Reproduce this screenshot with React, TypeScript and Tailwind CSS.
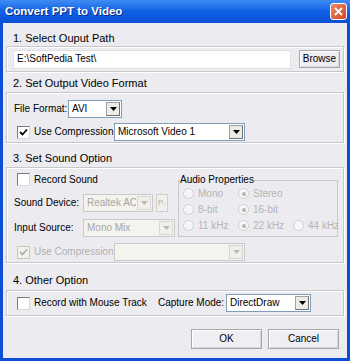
import React from "react";

const font = { fontFamily: '"Liberation Sans", Arial, sans-serif' };

function Select({ value, width, disabled }: { value: string; width: string; disabled?: boolean }) {
  return (
    <div
      className={`flex h-[18px] shrink-0 items-center border ${
        disabled ? "border-[#c9c9cc] bg-[#f4f3ee] text-[#a5a5a5]" : "border-[#7f9db9] bg-white text-black"
      } ${width}`}
    >
      <span className="flex-1 overflow-hidden pl-[3px] text-[10px] leading-none">{value}</span>
      <div
        className={`m-[1px] flex h-[14px] w-[14px] shrink-0 items-center justify-center border ${
          disabled ? "border-[#d8d7d3] bg-[#f0efea]" : "border-[#a0a0a0] border-r-[#707070] border-b-[#707070] bg-[#ecebe6]"
        }`}
      >
        <svg width="7" height="4" viewBox="0 0 7 4">
          <path d="M0 0h7L3.5 4z" fill={disabled ? "#b9b9b9" : "#000"} />
        </svg>
      </div>
    </div>
  );
}

function Check({ checked, disabled }: { checked?: boolean; disabled?: boolean }) {
  return (
    <div
      className={`flex h-[13px] w-[13px] shrink-0 items-center justify-center border ${
        disabled ? "border-[#c9c7ba] bg-[#f2f1ec]" : "border-[#7a7a7a] border-r-[#d8d8d8] border-b-[#d8d8d8] bg-white"
      }`}
    >
      {checked && (
        <svg width="9" height="9" viewBox="0 0 9 9">
          <path d="M1 4l2.5 2.5L8 1.5" stroke={disabled ? "#b0b0b0" : "#000"} strokeWidth="1.8" fill="none" />
        </svg>
      )}
    </div>
  );
}

function Radio({ label, checked, w }: { label: string; checked?: boolean; w: string }) {
  return (
    <div className={`flex shrink-0 items-center gap-[4px] ${w}`}>
      <div className="flex h-[11px] w-[11px] shrink-0 items-center justify-center rounded-full border border-[#cfcfcf] bg-[#f6f6f6]">
        {checked && <div className="h-[4px] w-[4px] rounded-full bg-[#b4b4b4]" />}
      </div>
      <span className="text-[10px] leading-none text-[#b5b5b5]">{label}</span>
    </div>
  );
}

function Group({ className, children }: { className?: string; children: React.ReactNode }) {
  return (
    <div className={`shrink-0 border border-[#c8c7cc] shadow-[inset_1px_1px_0_#fff,1px_1px_0_#fff] ${className ?? ""}`}>
      {children}
    </div>
  );
}

function Label({ children, className }: { children: React.ReactNode; className: string }) {
  return <div className={`h-[14px] shrink-0 px-[7px] text-[11px] leading-[14px] ${className}`}>{children}</div>;
}

function Button({ children, className }: { children: React.ReactNode; className?: string }) {
  return (
    <div
      className={`flex shrink-0 items-center justify-center border border-[#a8a8a8] bg-[#efeef2] text-[10px] text-black shadow-[inset_1px_1px_0_#fff,inset_-1px_-1px_0_#d6d5da] ${className ?? ""}`}
    >
      {children}
    </div>
  );
}

export default function App() {
  return (
    <div className="flex h-[361px] w-[350px] flex-col overflow-hidden whitespace-nowrap bg-[#0a4fd6]" style={font}>
      {/* title bar */}
      <div className="flex h-[23px] shrink-0 items-center justify-between bg-gradient-to-b from-[#3f8cf3] via-[#0f5fe6] to-[#0a50d4] pl-[5px] pr-[3px]">
        <span className="text-[11.5px] font-bold text-white [text-shadow:1px_1px_0_#0a2a80]">Convert PPT to Video</span>
        <div className="flex h-[17px] w-[17px] items-center justify-center rounded-[3px] border border-white bg-gradient-to-br from-[#e98a6a] to-[#d2431c]">
          <svg width="9" height="9" viewBox="0 0 9 9">
            <path d="M1 1l7 7M8 1l-7 7" stroke="#fff" strokeWidth="1.8" />
          </svg>
        </div>
      </div>

      {/* body */}
      <div className="mx-[3px] mb-[3px] flex flex-1 flex-col bg-[#ecebef] px-[3px] pt-[8px] text-[10px] leading-[12px] text-black">
        <Label className="mb-[1px]">1. Select Ouput Path</Label>
        <Group className="flex h-[26px] items-center gap-[8px] px-[6px]">
          <div className="flex h-[19px] w-[278px] shrink-0 items-center border border-[#e0e0e0] bg-white pl-[3px] text-[10px]">
            E:\SoftPedia Test\
          </div>
          <Button className="h-[18px] w-[41px] border-[#555] shadow-[inset_1px_1px_0_#fff,inset_-1px_-1px_0_#999]">Browse</Button>
        </Group>

        <Label className="mb-[2px] mt-[4px]">2. Set Output Video Format</Label>
        <Group className="flex h-[51px] flex-col gap-[5px] px-[7px] pt-[7px]">
          <div className="flex items-center">
            <span className="w-[54px] shrink-0">File Format:</span>
            <Select value="AVI" width="w-[54px]" />
          </div>
          <div className="flex items-center pl-[3px]">
            <Check checked />
            <span className="ml-[4px] w-[80px] shrink-0">Use Compression</span>
            <Select value="Microsoft Video 1" width="w-[131px]" />
          </div>
        </Group>

        <Label className="mb-[2px] mt-[8px]">3. Set Sound Option</Label>
        <Group className="flex h-[96px] flex-col px-[7px] pt-[5px]">
          <div className="flex">
            <div className="flex w-[164px] shrink-0 flex-col">
              <div className="flex items-center pl-[3px]">
                <Check />
                <span className="ml-[4px]">Record Sound</span>
              </div>
              <div className="mt-[8px] flex items-center">
                <span className="w-[69px] shrink-0">Sound Device:</span>
                <Select value="Realtek AC97" width="w-[70px]" disabled />
                <div className="ml-[3px] flex h-[18px] w-[12px] shrink-0 items-center overflow-hidden border border-[#d0cfd3] bg-[#f0efea] pl-[1px] text-[8px] text-[#b0b0b0]">P..</div>
              </div>
              <div className="mt-[7px] flex items-center">
                <span className="w-[69px] shrink-0">Input Source:</span>
                <Select value="Mono Mix" width="w-[92px]" disabled />
              </div>
            </div>
            <fieldset className="mt-[2px] h-[62px] w-[160px] shrink-0 border border-[#c8c7cc] pb-[2px] pl-[4px] pr-0">
              <legend className="-ml-[3px] px-0 text-[10px] leading-none">Audio Properties</legend>
              <div className="flex flex-col gap-[5px] pt-[3px]">
                <div className="flex">
                  <Radio label="Mono" w="w-[55px]" />
                  <Radio label="Stereo" checked w="w-[55px]" />
                </div>
                <div className="flex">
                  <Radio label="8-bit" w="w-[55px]" />
                  <Radio label="16-bit" checked w="w-[55px]" />
                </div>
                <div className="flex">
                  <Radio label="11 kHz" w="w-[55px]" />
                  <Radio label="22 kHz" checked w="w-[55px]" />
                  <Radio label="44 kHz" w="w-[44px]" />
                </div>
              </div>
            </fieldset>
          </div>
          <div className="mt-[6px] flex items-center pl-[3px]">
            <Check checked disabled />
            <span className="ml-[4px] w-[80px] shrink-0 text-[#b0b0b0]">Use Compression</span>
            <Select value="" width="w-[131px]" disabled />
          </div>
        </Group>

        <Label className="mb-[3px] mt-[10px]">4. Other Option</Label>
        <Group className="flex h-[26px] items-center pl-[10px]">
          <Check />
          <span className="ml-[4px] w-[124px] shrink-0">Record with Mouse Track</span>
          <span className="w-[68px] shrink-0">Capture Mode:</span>
          <Select value="DirectDraw" width="w-[85px]" />
        </Group>

        <div className="mt-[13px] flex justify-end gap-[6px] pr-[5px]">
          <Button className="h-[20px] w-[71px]">OK</Button>
          <Button className="h-[20px] w-[71px]">Cancel</Button>
        </div>
      </div>
    </div>
  );
}
